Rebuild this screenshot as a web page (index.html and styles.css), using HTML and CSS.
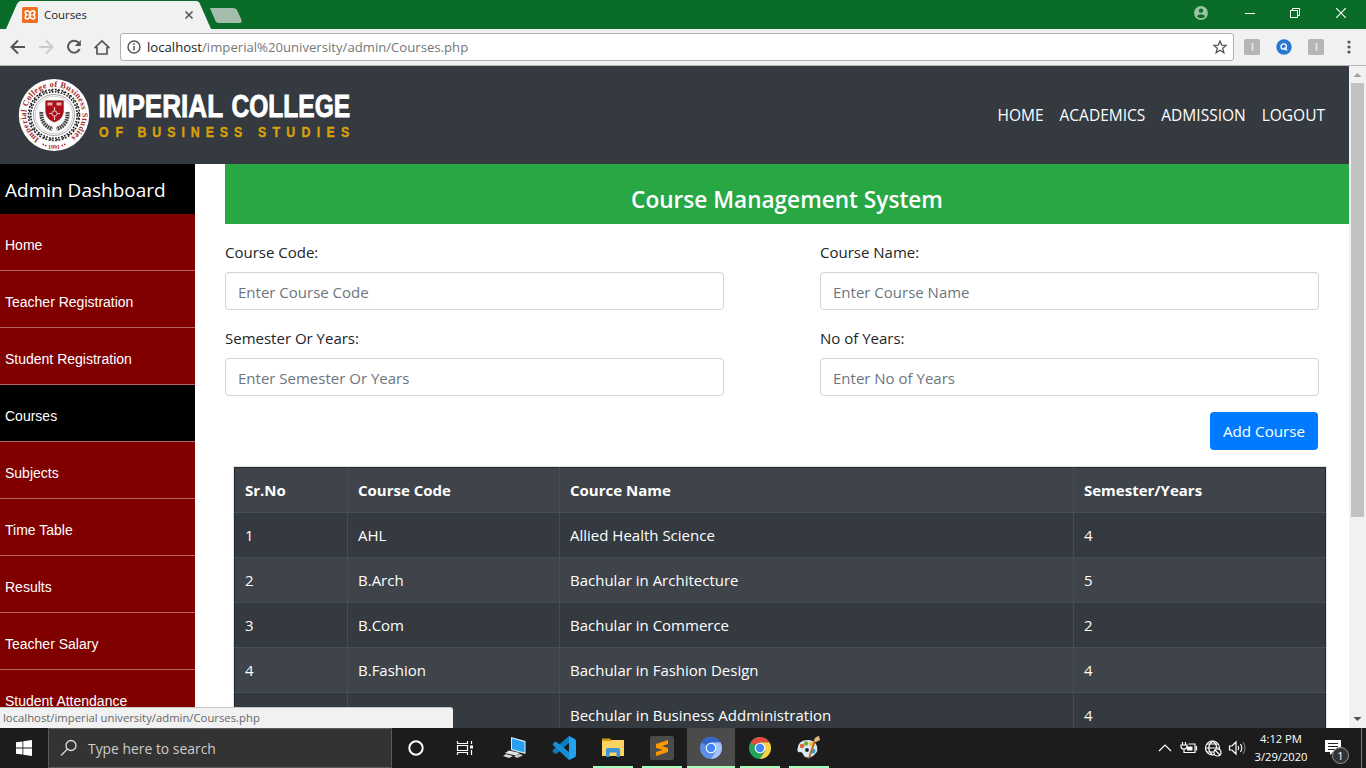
FILE: index.html
```html
<!DOCTYPE html>
<html lang="en">
<head>
<meta charset="utf-8">
<title>Courses</title>
<link rel="stylesheet" href="styles.css">
</head>
<body>
<div class="screen">
  <header class="titlebar">
    <svg class="tab-shape" width="245" height="29" viewBox="0 0 245 29"><path d="M6 29L17 4Q18.500 1 21 1H196Q199 1 200 4L211 29Z" fill="#f1f1f1"/><path d="M210 8H233Q236 8 237 10L241.500 20Q242 23 240 23H219Q216 23 215 20Z" fill="#a6bdad"/></svg>
    <div class="tab">
      <svg width="16" height="16" viewBox="0 0 16 16"><rect width="16" height="16" rx="1.500" fill="#ed6f20"/><path d="M5.300 7.700Q3.200 7.500 3.200 5.700 3.200 3.800 5.200 3.800 6.800 3.800 8 6 9.200 3.800 10.800 3.800 12.800 3.800 12.800 5.700 12.800 7.500 10.700 7.700 12.800 8.200 12.800 10 12.800 12 10.800 12 9.300 12 8 9.700 6.700 12 5.200 12 3.200 12 3.200 10 3.200 8.200 5.300 7.700ZM6.500 7.900H9.500" fill="none" stroke="#fff" stroke-width="1.600"/></svg>
      <span class="tab-name">Courses</span>
      <svg class="tab-close" width="10" height="10" viewBox="0 0 10 10"><path d="M1.500 1.500L8.500 8.500M8.500 1.500L1.500 8.500" stroke="#555" stroke-width="1.600"/></svg>
    </div>
    <div class="window-controls">
      <svg width="14" height="14" viewBox="0 0 14 14"><circle cx="7" cy="7" r="6.900" fill="#9cc3a6"/><circle cx="7" cy="4.600" r="2.200" fill="#096d29"/><path d="M2.800 10.100Q7 6.500 11.200 10.100 9.500 12.300 7 12.300T2.800 10.100Z" fill="#096d29"/></svg>
      <svg class="minimize" width="10" height="10" viewBox="0 0 10 10"><path d="M0 5.500H10" stroke="#fff"/></svg>
      <svg class="restore" width="10" height="10" viewBox="0 0 10 10"><path d="M.5 2.500H7.500V9.500H.5ZM2.500 2V.5H9.500V7.500H8" fill="none" stroke="#fff"/></svg>
      <svg class="close" width="10" height="10" viewBox="0 0 10 10"><path d="M0 0L10 10M10 0L0 10" stroke="#fff" stroke-width="1.200"/></svg>
    </div>
  </header>
  <div class="toolbar">
    <svg class="nav-icons" width="120" height="36" viewBox="0 0 120 36" fill="none" stroke="#555" stroke-width="2"><path d="M25 18H12.500M18 11.500L11.500 18L18 24.500"/><path d="M39 18H51.500M46 11.500L52.500 18L46 24.500" stroke="#ccc"/><path d="M78.800 14A6 6 0 1 0 79.600 20"/><path d="M80.800 11V17H74.800Z" fill="#555" stroke="none"/><path d="M94.500 19.200L102 12L109.500 19.200M97 18V25H107V18" stroke-width="1.700"/></svg>
    <div class="address">
      <svg width="14" height="14" viewBox="0 0 14 14"><circle cx="7" cy="7" r="6" fill="none" stroke="#555" stroke-width="1.400"/><path d="M7 6V10.500M7 3.300V5" stroke="#555" stroke-width="1.500"/></svg>
      <span class="url"><b>localhost</b>/imperial%20university/admin/Courses.php</span>
      <svg class="star" width="14" height="14" viewBox="0 0 14 14"><path d="M7 1L8.700 5.100L13.200 5.400L9.700 8.300L10.900 12.800L7 10.300L3.100 12.800L4.300 8.300L.8 5.400L5.300 5.100Z" fill="none" stroke="#555" stroke-width="1.300"/></svg>
    </div>
    <div class="extensions">
      <svg width="16" height="16"><rect width="16" height="16" rx="1.500" fill="#b5b5b5"/><path d="M8.500 4V12" stroke="#e8e8e8" stroke-width="1.500"/></svg>
      <svg width="16" height="16"><circle cx="8" cy="8" r="7.700" fill="#2878d0"/><circle cx="7.700" cy="7.500" r="2.700" fill="none" stroke="#fff" stroke-width="1.300"/><path d="M8.500 8.500L11 11.500" stroke="#fff" stroke-width="1.300"/></svg>
      <svg width="16" height="16"><rect width="16" height="16" rx="1.500" fill="#b5b5b5"/><path d="M8.500 4V12" stroke="#e8e8e8" stroke-width="1.500"/></svg>
      <svg class="dots" width="4" height="14" fill="#555"><circle cx="2" cy="2" r="1.600"/><circle cx="2" cy="7" r="1.600"/><circle cx="2" cy="12" r="1.600"/></svg>
    </div>
  </div>

  <div class="viewport">
    <div class="page">
      <header class="site-header">
        <svg class="brand" width="350" height="78" viewBox="0 0 350 78">
          <defs><path id="ring" d="M22.600 62.800A28 28 0 1 1 54 61.400"/></defs>
          <ellipse cx="37" cy="39" rx="35.200" ry="36" fill="#fff"/>
          <text class="seal-text"><textPath href="#ring" textLength="142">Imperial College of Business Studies</textPath></text>
          <text class="seal-year" x="37" y="72.500">1991</text>
          <path d="M25.500 68.500h1.500M28 69.500h1.500M44.500 69.500h1.500M47 68.500h1.500" stroke="#a52a2e" stroke-width="1.400"/>
          <circle cx="37" cy="39" r="24.600" fill="none" stroke="#222" stroke-width="1.300" stroke-dasharray="1.700 4.740" stroke-dashoffset="-2.300"/>
          <circle cx="37" cy="39" r="25.500" fill="none" stroke="#222" stroke-width="1.600" stroke-dasharray="1.900 1.440 1.900 1.440"/>
          <circle cx="37" cy="39" r="23.200" fill="none" stroke="#222" stroke-width="1.600" stroke-dasharray="1.700 1.340 1.700 1.340"/>
          <circle cx="37" cy="39" r="20.500" fill="none" stroke="#777" stroke-width=".7"/>
          <circle cx="37" cy="39" r="18.700" fill="none" stroke="#bbb" stroke-width=".7"/>
          <path d="M24.500 36Q23.500 49 35.500 53M50.500 36Q51.500 49 39.500 53" fill="none" stroke="#444" stroke-width="4" stroke-dasharray="1.700 .7"/>
          <path d="M28.800 24.800H46.300V36Q45.500 43.500 37.500 46Q29.500 43.500 28.800 36Z" fill="#ad0e19" stroke="#702020" stroke-width=".7"/>
          <path d="M30.500 26.500H35.500V29.500H30.500ZM39.500 26.500H44.500V29.500H39.500Z" fill="#e9a9ab"/><path d="M37.500 31V44M32 37.500H43" stroke="#efc8c8" stroke-width="1.200"/><circle cx="37.500" cy="37.500" r="2.600" fill="#ad0e19" stroke="#efc8c8"/>
          <g class="brand-name"><text transform="translate(81.500 41) scale(.815 1)">IMPERIAL</text><text transform="translate(214.500 41) scale(.768 1)">COLLEGE</text></g>
          <g class="brand-sub">
            <text transform="translate(82 61) scale(.8 1)" textLength="30">OF</text>
            <text transform="translate(120.500 61) scale(.8 1)" textLength="131">BUSINESS</text>
            <text transform="translate(241 61) scale(.8 1)" textLength="114">STUDIES</text>
          </g>
        </svg>
        <nav class="main-nav"><a>HOME</a><a>ACADEMICS</a><a>ADMISSION</a><a>LOGOUT</a></nav>
      </header>
      <div class="columns">
        <aside class="sidebar">
          <h1>Admin Dashboard</h1>
          <a>Home</a><a>Teacher Registration</a><a>Student Registration</a><a class="active">Courses</a><a>Subjects</a><a>Time Table</a><a>Results</a><a>Teacher Salary</a><a>Student Attendance</a>
        </aside>
        <main class="content">
          <h2>Course Management System</h2>
          <form class="course-form">
            <label>Course Code:<input type="text" placeholder="Enter Course Code"></label>
            <label>Course Name:<input type="text" placeholder="Enter Course Name"></label>
            <label>Semester Or Years:<input type="text" placeholder="Enter Semester Or Years"></label>
            <label>No of Years:<input type="text" placeholder="Enter No of Years"></label>
          </form>
          <div class="actions"><button type="button">Add Course</button></div>
          <table class="courses">
            <colgroup><col class="c1"><col class="c2"><col class="c3"><col class="c4"></colgroup>
            <tr><th>Sr.No</th><th>Course Code</th><th>Cource Name</th><th>Semester/Years</th></tr>
            <tr><td>1</td><td>AHL</td><td>Allied Health Science</td><td>4</td></tr>
            <tr><td>2</td><td>B.Arch</td><td>Bachular in Architecture</td><td>5</td></tr>
            <tr><td>3</td><td>B.Com</td><td>Bachular in Commerce</td><td>2</td></tr>
            <tr><td>4</td><td>B.Fashion</td><td>Bachular in Fashion Design</td><td>4</td></tr>
            <tr><td></td><td></td><td>Bechular in Business Addministration</td><td>4</td></tr>
          </table>
        </main>
      </div>
    </div>
    <div class="scrollbar">
      <svg width="17" height="17"><path d="M4.500 11L8.500 7L12.500 11Z" fill="#a3a3a3"/></svg>
      <div class="thumb"></div>
      <svg class="down" width="17" height="17"><path d="M4.500 6L8.500 10L12.500 6Z" fill="#505050"/></svg>
    </div>
    <div class="status">localhost/imperial university/admin/Courses.php</div>
  </div>

  <footer class="taskbar">
    <div class="start"><svg width="16" height="16" viewBox="0 0 16 16" fill="#fff"><path d="M0 2.300L6.500 1.400V7.500H0ZM7.300 1.300L16 0V7.500H7.300ZM0 8.400H6.500V14.600L0 13.700ZM7.300 8.400H16V16L7.300 14.800Z"/></svg></div>
    <div class="search"><svg width="18" height="18" viewBox="0 0 18 18"><circle cx="11" cy="6.500" r="5" fill="none" stroke="#ddd" stroke-width="1.300"/><path d="M7.500 10L1 16.500" stroke="#ddd" stroke-width="1.300"/></svg><span>Type here to search</span></div>
    <div class="app"><svg width="18" height="18"><circle cx="9" cy="9" r="6.700" fill="none" stroke="#fff" stroke-width="2"/></svg></div>
    <div class="app task-view"><svg width="18" height="18" viewBox="0 0 18 18" fill="none" stroke="#fff" stroke-width="1.200"><path d="M1.500 2V4.500H11.500V2M1.500 16V13.500H11.500V16M1.500 6.500H11.500V11.500H1.500ZM15.500 2V5M15.500 11V16"/><path d="M14 6.500H17V9.500H14Z" fill="#fff" stroke="none"/></svg></div>
    <div class="app"><svg width="24" height="24" viewBox="0 0 24 24"><path d="M8 1L22.500 5V18L8 14Z" fill="#d6eefa"/><path d="M9 2.500L21.500 6V16.500L9 13Z" fill="#28a0ef"/><path d="M6 14.500L17 17L13 19.500L2 17Z" fill="#e6e6e6"/><path d="M11 20L17 18L20 19.500L14 22Z" fill="#ccc"/><path d="M3 18L10 20L6 22L0 20Z" fill="#d9d9d9"/></svg></div>
    <div class="app"><svg width="26" height="26" viewBox="0 0 26 26"><path d="M18 1V8L5 19L2.500 17.500Q.5 16 3 14Z" fill="#087fc5"/><path d="M3 11Q.5 10 3 7.500L5 6.500L18 17V25Z" fill="#168ed3"/><path d="M18 1L24 4Q25 5 25 6V20Q25 21.500 23.500 22.500L18 25Z" fill="#24a3ed"/></svg></div>
    <div class="app running"><svg width="24" height="22" viewBox="0 0 24 22"><path d="M1 3H23V19H1Z" fill="#fcd462"/><path d="M1 1.500H9L11 4H1Z" fill="#d99b12"/><path d="M5 20V12.500Q5 11 6.500 11H17.500Q19 11 19 12.500V20H15.500V15.500H8.500V20Z" fill="#3a94d9"/></svg></div>
    <div class="app running"><svg width="24" height="24" viewBox="0 0 24 24"><rect width="24" height="24" rx="2" fill="#4b4b4b"/><path d="M6 8L18 4V8L12 10L18 12V16L6 20V16L13 13.700L6 12Z" fill="#ff9800"/></svg></div>
    <div class="app running selected"><svg width="24" height="24" viewBox="0 0 24 24"><circle cx="12" cy="12" r="11" fill="#5c8fe8"/><path d="M12 12L2.500 6.500A11 11 0 0 1 21.500 6.500H12Z" fill="#3267ca"/><path d="M12 23A11 11 0 0 0 21.500 6.500H12L17 15Z" fill="#a5c3fb"/><circle cx="12" cy="12" r="5.300" fill="#fff"/><circle cx="12" cy="12" r="4.200" fill="#4285f4"/></svg></div>
    <div class="app running"><svg width="24" height="24" viewBox="0 0 24 24"><circle cx="12" cy="12" r="11" fill="#25a55a"/><path d="M12 12L2.500 6.500A11 11 0 0 1 21.500 6.500H12Z" fill="#e14a3c"/><path d="M12 23A11 11 0 0 0 21.500 6.500H12L17 15Z" fill="#fcd043"/><circle cx="12" cy="12" r="5.300" fill="#fff"/><circle cx="12" cy="12" r="4.200" fill="#4285f4"/></svg></div>
    <div class="app running"><svg width="26" height="24" viewBox="0 0 26 24"><path d="M12 4Q2 4 1.500 13Q1 17 5 16Q7 17 8 20Q11 23 17 20Q24 15 20 8Q17 4 12 4Z" fill="#d9eaf4"/><circle cx="6" cy="10" r="2.300" fill="#e06538"/><circle cx="10" cy="7.500" r="2.200" fill="#75ae36"/><circle cx="15" cy="8" r="2.200" fill="#ecc33d"/><circle cx="17" cy="15" r="2.500" fill="#3b9cda"/><circle cx="11" cy="14" r="1.900" fill="#222"/><path d="M20 5L14 22L12 23L13 19L18 4Z" fill="#ba6c27"/><path d="M18 5Q18 1 23 0L24 4L20 6Z" fill="#dfb983"/></svg></div>
    <div class="tray">
      <svg width="90" height="20" viewBox="0 0 90 20" fill="none" stroke="#fff" stroke-width="1.200"><path d="M2 13L8 7L14 13"/><path d="M25.500 4V7M28.500 4V7M24 7H30V8.500Q30 11 27 11T24 8.500ZM27 11V14.500H38V6H31.500M39.500 8V12.500"/><path d="M30 8.500H35.500V12.500H30Z" fill="#fff" stroke="none"/><circle cx="55.500" cy="10" r="7"/><path d="M48.500 10H62M50 6H61M50 14H57M55.500 3Q48 10 55.500 17M55.500 3Q60 6 59.500 10"/><circle cx="60.500" cy="14.500" r="3.500" fill="#1c1c1c"/><path d="M58 12L63 17M72.500 8H75L79 4V16L75 12H72.500ZM81 8Q82.500 10 81 12M83.500 6Q86 10 83.500 14"/><path d="M86 4Q90 10 86 16" stroke="#777"/></svg>
      <div class="clock"><span>4:12 PM</span><span>3/29/2020</span></div>
      <div class="notice"><svg width="26" height="26" viewBox="0 0 26 26"><path d="M1 1H17V13H9L6 16V13H1Z" fill="#fff"/><path d="M4 4.500H14M4 7.500H14M4 10.500H11" stroke="#222"/><circle cx="16.500" cy="16.500" r="8" fill="#333" stroke="#999"/><text class="badge-num" x="16.500" y="20.500">1</text></svg></div>
    </div>
  </footer>
</div>
</body>
</html>
```
FILE: styles.css
```css
*{box-sizing:border-box}
body{margin:0;font-family:"Open Sans","Noto Sans",sans-serif;font-size:15px;overflow:hidden}
svg{display:block;flex:none}
.screen{width:1366px;height:768px;display:flex;flex-direction:column;overflow:hidden}
.titlebar{height:29px;flex:none;background:#096d29;display:flex;position:relative}
.tab-shape{position:absolute;left:0;top:0}
.tab{position:relative;width:210px;height:29px;padding-left:22px;display:flex;align-items:center}
.tab-name{font-size:11.4px;margin-left:6px;color:#222}
.tab-close{margin-left:auto;margin-right:16px}
.window-controls{display:flex;align-items:center;margin-left:auto;padding:0 20px 3px 0}
.minimize{margin-left:37px}.restore{margin-left:35px}.close{margin-left:36px}
.toolbar{height:37px;flex:none;background:#f1f1f1;border-bottom:1px solid #b6b4b6;display:flex;align-items:center}
.address{width:1114px;height:28px;border:1px solid #b0b0b0;border-radius:3px;background:#fff;display:flex;align-items:center;padding:0 6px}
.url{margin-left:6px;font-size:13.15px;color:#777}
.url b{font-weight:400;color:#222}
.star{margin-left:auto}
.extensions{display:flex;align-items:center;gap:16px;margin-left:10px}
.dots{margin-left:7px}
.viewport{height:662px;flex:none;display:flex;position:relative;overflow:hidden;background:#fff}
.page{width:1349px;height:662px;overflow:hidden}
.site-header{height:98px;background:#343a40;display:flex;align-items:center;padding:0 24px 0 17px;justify-content:space-between}
.seal-text{font:bold 8.4px "Liberation Serif",serif;fill:#a52a2e}
.seal-year{font:bold 6px "Liberation Serif",serif;fill:#a52a2e;text-anchor:middle}
.brand-name{font:bold 32px "Liberation Sans",sans-serif;fill:#fff;stroke:#fff;stroke-width:.9px}
.brand-sub{font:bold 15.5px "Liberation Sans",sans-serif;fill:#d9a009;stroke:#d9a009;stroke-width:.4px}
.main-nav{display:flex;gap:16px;color:#fff;font-size:15.5px}
.columns{display:flex;align-items:flex-start}
.sidebar{width:195px;flex:none;background:maroon}
.sidebar h1{margin:0;height:50px;background:#000;color:#fff;font-weight:400;font-size:19px;line-height:52px;padding-left:5px}
.sidebar a{display:block;height:57px;padding:22px 0 0 5px;border-bottom:1px solid #b26666;color:#fff;font:14px/18px "Liberation Sans",sans-serif}
.sidebar a.active{background:#000}
.content{flex:1;padding-left:30px}
.content h2{margin:0;height:60px;background:#28a745;color:#fff;text-align:center;font-size:22.6px;font-weight:600;line-height:72px}
.course-form{display:grid;grid-template-columns:499px 499px;column-gap:96px;row-gap:16px;padding-top:16px}
.course-form label{display:block;color:#212529;line-height:24px}
.course-form input{display:block;width:499px;height:38px;margin-top:8px;border:1px solid #ced4da;border-radius:4px;padding:2px 12px 0;font:15px "Open Sans","Noto Sans",sans-serif}
.course-form input::placeholder{color:#6c757d;opacity:1}
.actions{display:flex;justify-content:flex-end;padding:16px 31px 17px 0}
.actions button{width:108px;height:38px;padding:0;border:0;border-radius:4px;background:#007bff;color:#fff;font:15.2px "Open Sans","Noto Sans",sans-serif}
.courses{width:1092px;margin-left:9px;border-collapse:collapse;table-layout:fixed;background:#343a40;color:#fff;border:1px solid #26292d;outline:1px solid #dee2e6}
.c1{width:113px}.c2{width:212px}.c3{width:514px}
.courses th,.courses td{height:45px;padding:0 10px;border:1px solid #454d55;text-align:left;line-height:24px}
.courses tr:first-child th{border-top-color:#26292d;padding-bottom:1px}
.courses tr>:first-child{border-left-color:#26292d}
.courses tr>:last-child{border-right-color:#26292d}
.courses tr:nth-child(odd){background:#3e444a}
.scrollbar{width:17px;background:#f1f1f1;display:flex;flex-direction:column}
.thumb{width:13px;height:434px;margin-left:2px;background:#c1c1c1}
.down{margin-top:auto}
.status{position:absolute;left:0;bottom:0;width:453px;height:21px;background:#f1f1f1;border-top:1px solid #c8c8c8;border-radius:0 3px 0 0;font-size:11.3px;line-height:20px;padding-left:3px;color:#666}
.taskbar{height:40px;flex:none;background:#1c1c1c;display:flex;color:#fff}
.start{width:48px;display:flex;align-items:center;justify-content:center}
.search{width:344px;border:1px solid #5a5a5a;background:#333;display:flex;align-items:center;padding-left:11px;color:#ccc;font-size:13.9px}
.search span{margin-left:10px}
.app{width:48px;margin-right:1px;display:flex;align-items:center;justify-content:center;position:relative}
.task-view{margin-right:2px}
.running::after{content:"";position:absolute;left:4px;right:4px;bottom:0;height:2px;background:#aaffbe}
.selected{background:#4b4b4b}
.selected::after{left:0;right:0}
.tray{margin-left:auto;display:flex;align-items:center}
.tray>svg{margin-right:-2px}
.clock{width:72px;display:flex;flex-direction:column;align-items:center;font-size:11.2px;line-height:18px;padding-bottom:1px}
.notice{width:45px;height:40px;margin-right:4px;border-right:1px solid #777;padding:11px 0 0 7px}
.badge-num{font:11px "Open Sans",sans-serif;fill:#fff;text-anchor:middle}
```
